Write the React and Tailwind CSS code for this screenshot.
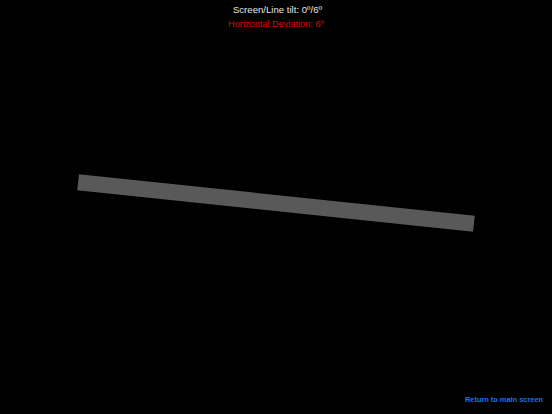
export default function App() {
  return (
    <div
      className="relative w-[552px] h-[414px] bg-black overflow-hidden flex flex-col"
      style={{ fontFamily: '"Liberation Sans", Arial, sans-serif' }}
    >
      <div className="flex flex-col items-center pt-[3px]">
        <p className="text-[9.6px] leading-[13px] text-[#e6e6e6] pl-[3px]">Screen/Line tilt: 0º/6º</p>
        <p className="text-[9.2px] leading-[13px] mt-[2px] text-[#e00000]">Horizontal Deviation: 6º</p>
      </div>
      <div className="flex-1 flex items-center justify-center pb-[21px]">
        <div className="w-[398px] h-[16px] bg-[#595959] rotate-[6deg]" />
      </div>
      <div className="flex justify-end pr-[9px] pb-[9px]">
        <button className="text-[7.4px] leading-[10px] font-bold text-[#1a73e8]">Return to main screen</button>
      </div>
    </div>
  );
}
